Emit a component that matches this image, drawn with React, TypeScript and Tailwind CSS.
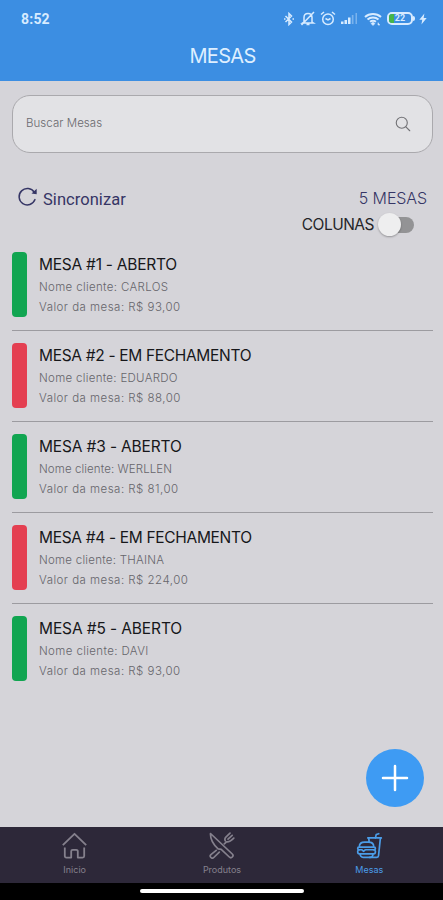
import React, { useState } from 'react';
import { IoFastFoodOutline, IoSearchOutline } from 'react-icons/io5';

const tables = [
  { id: 1, open: true, client: 'CARLOS', total: '93,00', titleSpacing: 'tracking-[-0.25px]', clientSpacing: 'tracking-[0.34px]' },
  { id: 2, open: false, client: 'EDUARDO', total: '88,00', titleSpacing: 'tracking-[-0.32px]', clientSpacing: 'tracking-[0.3px]' },
  { id: 3, open: true, client: 'WERLLEN', total: '81,00', titleSpacing: 'tracking-[-0.15px]', clientSpacing: 'tracking-[0.1px]' },
  { id: 4, open: false, client: 'THAINA', total: '224,00', titleSpacing: 'tracking-[-0.32px]', clientSpacing: 'tracking-[0.25px]' },
  { id: 5, open: true, client: 'DAVI', total: '93,00', titleSpacing: 'tracking-[-0.12px]', clientSpacing: 'tracking-[0.38px]' },
];

function HomeIcon() {
  return (
    <svg className="h-[27px] w-[25px]" viewBox="0 0 25 27" fill="none" stroke="currentColor" strokeWidth="1.8" strokeLinejoin="round">
      <path d="M.8 13.200 12.500 1.800l11.700 11.400" />
      <path d="M2.800 15.500v8.600a1.500 1.500 0 0 0 1.500 1.500h4.900v-6.300a1.500 1.500 0 0 1 1.500-1.500h3.600a1.500 1.500 0 0 1 1.500 1.500v6.300h4.900a1.500 1.500 0 0 0 1.500-1.500v-8.600" />
    </svg>
  );
}

function UtensilsIcon() {
  return (
    <svg className="h-[27px] w-[27px]" viewBox="0 0 27 27" fill="none" stroke="currentColor" strokeWidth="1.7" strokeLinecap="round" strokeLinejoin="round">
      <path d="M2.500 1.500 24.300 22a2.100 2.100 0 0 1-3 3l-8.100-7.700-3.100-.4C5.300 12.500 2.200 7.500 2.500 1.500Z" />
      <path d="m8.200 18.400-5.300 4.200a2 2 0 0 0 2.900 2.900l5.500-5.400" />
      <path d="m16.300 11.900 2.200-2.100c2.900.6 4.500-.9 7.300-3.700M22 1.200l-4.100 3.900c-1.300 1.300-1.200 2.500-.7 3.600" />
      <path d="m24.200 3.300-4.200 3.900" />
    </svg>
  );
}

function ReloadIcon() {
  return (
    <svg className="mb-[3px] h-[20px] w-[20px]" viewBox="0 0 20 20" fill="none" stroke="currentColor" strokeWidth="1.500" strokeLinecap="round">
      <path d="M17 12.600a8.200 8.200 0 1 1-.7-7.200" />
      <path d="M18.700 1.700v5.600l-5.200-.9z" fill="currentColor" stroke="none" />
    </svg>
  );
}

function StatusBar() {
  return (
    <div className="flex h-[37px] items-center justify-between pl-[21px] pr-[16px] text-[#d7ebff]">
      <span className="font-['Roboto',sans-serif] text-[14px] font-bold leading-none tracking-[0.2px]">8:52</span>
      <div className="flex items-center">
        <svg className="h-[14px] w-[10px]" viewBox="0 0 10 14" fill="none" stroke="currentColor" strokeWidth="1.500">
          <path d="m1.500 4 6 6L5 12.500v-11L7.500 4l-6 6M0 7h1.500M8.500 7H10" />
        </svg>
        <svg className="ml-[6px] h-[15px] w-[16px]" viewBox="0 0 16 15" fill="none" stroke="currentColor" strokeWidth="1.500">
          <path d="M4 11V6.500C4 4 5.500 2.500 8 2.500s4 1.500 4 4V11l1.500 1h-11L4 11ZM6.500 13.500h3M1.500 14 14 1" />
        </svg>
        <svg className="ml-[4px] h-[15px] w-[16px]" viewBox="0 0 16 15" fill="none" stroke="currentColor" strokeWidth="1.500">
          <circle cx="8" cy="8.200" r="5.300" />
          <path d="M5.500 7.500 8 9l2.500-1.500M1 3.500 4 1M15 3.500 12 1" />
        </svg>
        <svg className="ml-[5px] h-[13px] w-[17px]" viewBox="0 0 17 13" fill="currentColor">
          <path d="M0 9.500h2.500V12H0zM3.500 8H6v4H3.500zM7 5.500h2.500V12H7z" />
          <path d="M10.800 3h1.700v9h-1.700zM14.500 1H16v11h-1.500z" opacity=".4" />
        </svg>
        <svg className="ml-[6px] h-[14px] w-[18px]" viewBox="0 0 18 14" fill="none" stroke="currentColor" strokeWidth="2">
          <path d="M1 5c4.500-4 11.500-4 16 0M3.500 7.500c3-2.700 8-2.700 11 0M6 9.800c2-1.500 4-1.500 6 0" />
          <path d="m9 10.300 2 1.200L9 13.500l-2-2zM14 10.500v2.500h2" fill="currentColor" strokeWidth=".6" />
        </svg>
        <div className="relative ml-[5px] flex h-[13px] w-[26px] items-center justify-center overflow-hidden rounded-[5px] border-2 border-current">
          <div className="absolute inset-y-0 left-0 w-[5px] bg-[#45b549]" />
          <span className="relative font-['Roboto',sans-serif] text-[9px] font-bold leading-none">22</span>
        </div>
        <div className="h-[5px] w-[2px] rounded-r-sm bg-current" />
        <svg className="ml-[4px] h-[12px] w-[8px]" viewBox="0 0 8 13" fill="currentColor">
          <path d="M5.500.5 0 7.300h3.200L2.300 12.500 8 5.500H4.700z" />
        </svg>
      </div>
    </div>
  );
}

export default function App() {
  const [search, setSearch] = useState('');
  const [columns, setColumns] = useState(false);

  return (
    <div className="flex h-[900px] w-[443px] flex-col overflow-hidden bg-[#d5d4d9] font-['Inter',sans-serif]">
      <header className="h-[81px] shrink-0 bg-[#3c8ee2]">
        <StatusBar />
        <h1 className="pl-[2px] pt-[6px] text-center text-[20px] leading-[26px] tracking-[-0.700px] text-[#deefff]">MESAS</h1>
      </header>

      <main className="relative flex-1 pl-[12px] pr-[10px] pt-[14px]">
        <label className="flex h-[58px] items-center justify-between rounded-[18px] border border-[#aaa9ad] bg-[#e2e2e5] pl-[13px] pr-[20px]">
          <input
            className="w-[250px] bg-transparent pb-[1px] text-[11.500px] font-light tracking-[0.05px] text-[#69696d] outline-none placeholder:text-[#69696d]"
            placeholder="Buscar Mesas"
            value={search}
            onChange={(e) => setSearch(e.target.value)}
          />
          <IoSearchOutline className="h-[18px] w-[18px] text-[#727276]" />
        </label>

        <div className="mt-[33px] flex h-[25px] items-center justify-between pl-[6px] pr-[6px] text-[#353565]">
          <button className="flex items-center gap-[5px]">
            <ReloadIcon />
            <span className="pt-[3px] font-['Roboto',sans-serif] text-[16.500px] leading-none tracking-[0.05px]">Sincronizar</span>
          </button>
          <span className="pb-[1px] text-[16px] font-light leading-none tracking-[-0.100px]">5 MESAS</span>
        </div>

        <div className="flex h-[26px] items-center justify-end pr-[19px]">
          <span className="pt-[1px] text-[15.500px] leading-none tracking-[-0.500px] text-[#242428]">COLUNAS</span>
          <button
            role="switch"
            aria-checked={columns}
            aria-label="Colunas"
            className="relative ml-[4px] h-[24px] w-[36px]"
            onClick={() => setColumns(!columns)}
          >
            <span className="absolute right-0 top-[5px] h-[16px] w-[32px] rounded-full bg-[#939395]" />
            <span
              className={`absolute top-[1px] h-[23px] w-[23px] rounded-full bg-[#eeeeef] shadow-[0_1px_2px_rgba(0,0,0,0.3)] ${columns ? 'right-0' : 'left-0'}`}
            />
          </button>
        </div>

        <ul className="mt-[3px]">
          {tables.map((table) => (
            <li key={table.id} className="flex h-[91.100px] border-b border-[#9c9ba0] pt-[12px] last:border-b-0">
              <div className={`h-[65px] w-[15px] rounded-[4px] ${table.open ? 'bg-[#11a551]' : 'bg-[#e43f51]'}`} />
              <div className="ml-[12px] whitespace-nowrap pt-px text-[11.500px] font-light leading-[20px] text-[#66656b]">
                <h2 className={`text-[15.500px] font-normal leading-[24px] text-[#17171a] ${table.titleSpacing}`}>
                  MESA #{table.id} - {table.open ? 'ABERTO' : 'EM FECHAMENTO'}
                </h2>
                <p className={table.clientSpacing}>Nome cliente: {table.client}</p>
                <p className="tracking-[0.47px]">Valor da mesa: R$ {table.total}</p>
              </div>
            </li>
          ))}
        </ul>

        <button aria-label="Adicionar" className="absolute bottom-[20px] right-[19px] flex h-[58px] w-[58px] items-center justify-center rounded-full bg-[#3e9bf3]">
          <svg className="h-[28px] w-[28px]" viewBox="0 0 28 28" stroke="white" strokeWidth="2.500" strokeLinecap="round">
            <path d="M14 2v24M2 14h24" />
          </svg>
        </button>
      </main>

      <nav className="grid h-[56px] shrink-0 grid-cols-3 bg-[#2d2839] pl-[1px] text-[#85818d]">
        <div className="flex flex-col items-center pt-[5px]">
          <HomeIcon />
          <span className="mt-[5px] text-[9px] leading-[12px]">Inicio</span>
        </div>
        <div className="flex flex-col items-center pt-[5px]">
          <UtensilsIcon />
          <span className="mt-[5px] text-[9px] leading-[12px]">Produtos</span>
        </div>
        <div className="flex flex-col items-center pt-[5px] text-[#4b9de8]">
          <IoFastFoodOutline className="h-[27px] w-[27px] stroke-[10]" />
          <span className="mt-[5px] text-[9px] leading-[12px]">Mesas</span>
        </div>
      </nav>
      <div className="flex h-[17px] shrink-0 justify-center bg-black pt-[6px]">
        <div className="h-[4px] w-[164px] rounded-full bg-white" />
      </div>
    </div>
  );
}
